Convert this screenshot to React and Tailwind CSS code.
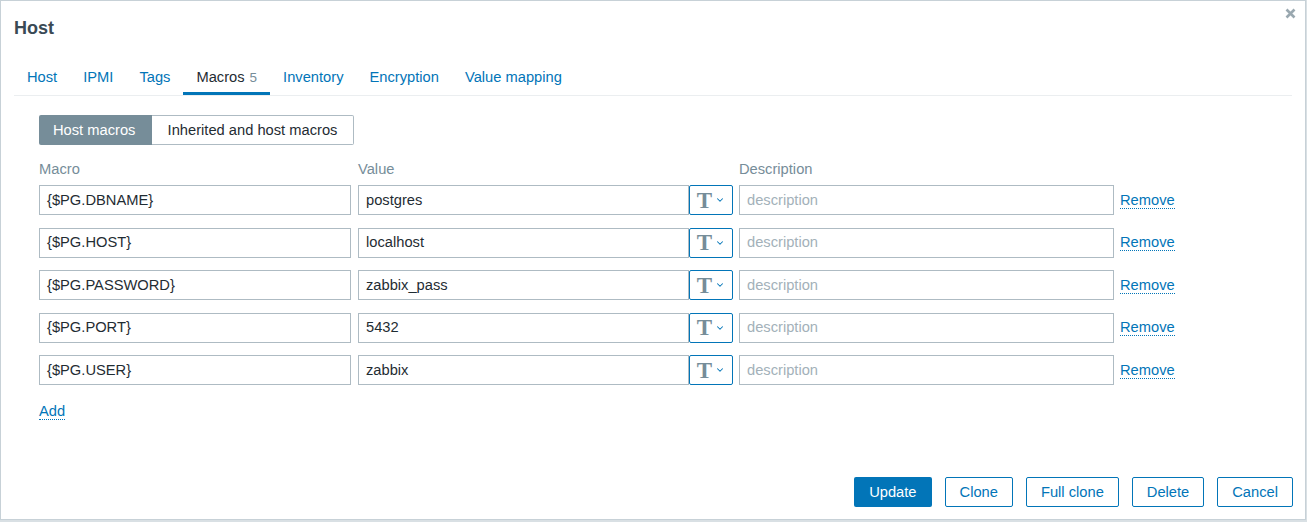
import React from 'react';
import { ChevronDown } from 'lucide-react';

const macros = [
  { macro: '{$PG.DBNAME}', value: 'postgres' },
  { macro: '{$PG.HOST}', value: 'localhost' },
  { macro: '{$PG.PASSWORD}', value: 'zabbix_pass' },
  { macro: '{$PG.PORT}', value: '5432' },
  { macro: '{$PG.USER}', value: 'zabbix' },
];

const tabs = ['Host', 'IPMI', 'Tags', 'Macros', 'Inventory', 'Encryption', 'Value mapping'];

const MacroRow = ({ row }) => (
  <div className="flex items-center h-[30px]">
    <div className="w-[312px] h-full border border-[#aebbc3] bg-white px-[7px] flex items-center text-[#1f2c33]">
      {row.macro}
    </div>
    <div className="ml-[7px] w-[331px] h-full border border-[#aebbc3] bg-white px-[7px] flex items-center text-[#1f2c33]">
      {row.value}
    </div>
    <div className="w-[44px] h-full border border-[#0275b8] rounded-[2px] bg-white flex items-center justify-center gap-[3px]">
      <span className="text-[23px] font-bold text-[#768d99] leading-none" style={{ fontFamily: '"Liberation Serif", serif' }}>T</span>
      <ChevronDown size={10} strokeWidth={2.5} className="text-[#0275b8]" />
    </div>
    <div className="ml-[6px] w-[375px] h-full border border-[#aebbc3] bg-white px-[7px] flex items-center text-[#a3b1b9]">
      description
    </div>
    <a className="ml-[6px] text-[#0275b8] border-b border-dotted border-[#0275b8] leading-[16px]">Remove</a>
  </div>
);

export default function App() {
  return (
    <div className="w-[1307px] h-[522px] bg-[#d9e0e4]" style={{ fontFamily: '"Liberation Sans", Arial, sans-serif' }}>
      <div className="relative w-[1306px] h-[520px] bg-white border border-[#c7d1d7] flex flex-col text-[14.7px]">
        <svg className="absolute right-[9px] top-[7px]" width="11" height="11" viewBox="0 0 11 11">
          <path d="M1.5 1.5 L9.5 9.5 M9.5 1.5 L1.5 9.5" stroke="#9aa8b0" strokeWidth="2.6" strokeLinecap="butt" />
        </svg>

        <div className="px-[13px] pt-[16px]">
          <h1 className="text-[18px] font-bold leading-[22px] text-[#3a4a55]">Host</h1>

          <div className="mt-[29px] flex border-b border-[#ebeef0]">
            {tabs.map((t) => (
              <div
                key={t}
                className={
                  'px-[13px] leading-[18px] pb-[5px] border-b-[3px] ' +
                  (t === 'Macros' ? 'border-[#0275b8] text-[#1f2c33]' : 'border-transparent text-[#0275b8]')
                }
              >
                {t}
                {t === 'Macros' && <span className="text-[#768d99] ml-[5px] text-[13.5px]">5</span>}
              </div>
            ))}
          </div>

          <div className="pl-[25px]">
            <div className="mt-[19px] flex h-[30px]">
              <div className="bg-[#768d99] text-white px-[14px] flex items-center rounded-l-[2px] w-[113px]">Host macros</div>
              <div className="border border-l-0 border-[#aebbc3] text-[#1f2c33] px-[15px] w-[202px] flex items-center justify-center rounded-r-[2px]">
                Inherited and host macros
              </div>
            </div>

            <div className="mt-[15px] flex leading-[18px] text-[#768d99]">
              <div className="w-[319px]">Macro</div>
              <div className="w-[381px]">Value</div>
              <div>Description</div>
            </div>

            <div className="mt-[7px] flex flex-col gap-[12.5px]">
              {macros.map((row) => (
                <MacroRow key={row.macro} row={row} />
              ))}
            </div>

            <div className="mt-[15px]">
              <a className="text-[#0275b8] border-b border-dotted border-[#0275b8] leading-[16px] inline-block">Add</a>
            </div>
          </div>
        </div>

        <div className="mt-auto flex justify-end gap-[13px] pr-[12px] pb-[12px]">
          <button className="h-[30px] px-[15px] rounded-[2px] bg-[#0275b8] text-white">Update</button>
          <button className="h-[30px] px-[14px] rounded-[2px] border border-[#0275b8] text-[#0275b8] bg-white">Clone</button>
          <button className="h-[30px] px-[14px] rounded-[2px] border border-[#0275b8] text-[#0275b8] bg-white">Full clone</button>
          <button className="h-[30px] px-[14px] rounded-[2px] border border-[#0275b8] text-[#0275b8] bg-white">Delete</button>
          <button className="h-[30px] px-[14px] rounded-[2px] border border-[#0275b8] text-[#0275b8] bg-white">Cancel</button>
        </div>
      </div>
    </div>
  );
}
